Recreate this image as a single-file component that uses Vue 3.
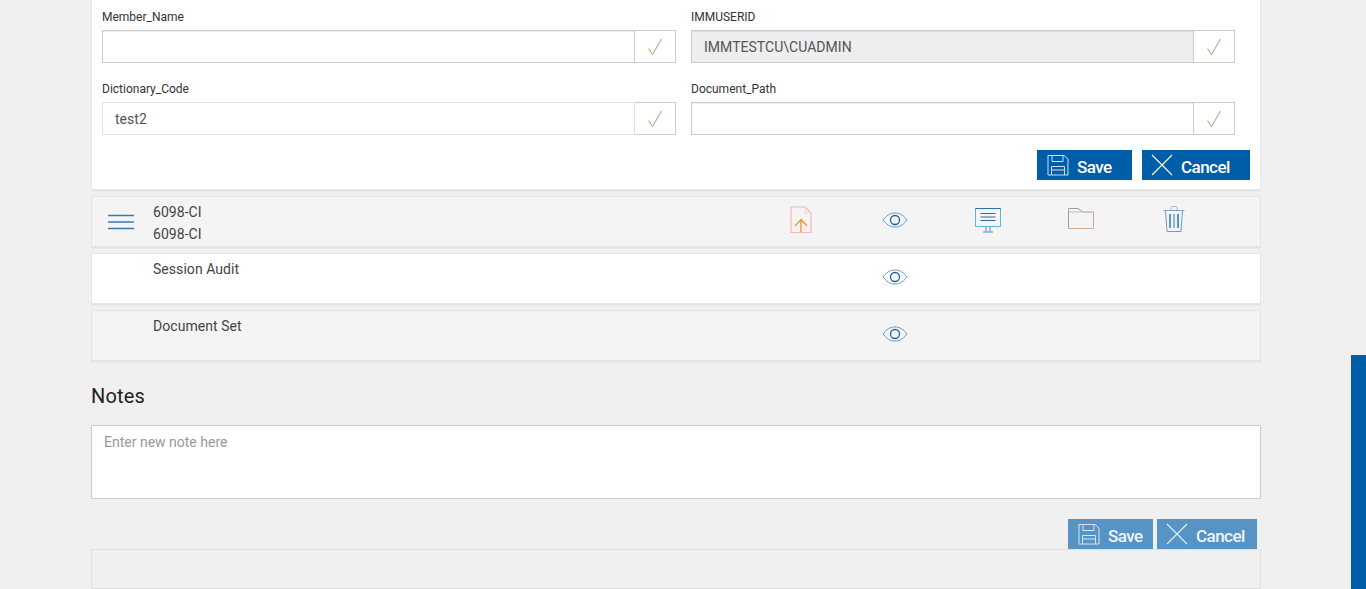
<script setup>
const top = [
  { label: 'Member_Name', value: '', state: 'wide' },
  { label: 'IMMUSERID', value: 'IMMTESTCU\\CUADMIN', state: 'narrow disabled' },
  { label: 'Dictionary_Code', value: 'test2', state: 'wide light' },
  { label: 'Document_Path', value: '', state: 'narrow' },
]
</script>

<template>
  <main class="page">
    <section class="card">
      <div class="fields">
        <div v-for="f in top" :key="f.label" class="field" :class="f.state">
          <label class="lbl">{{ f.label }}</label>
          <div class="group">
            <div class="input">{{ f.value }}</div>
            <div class="addon">
              <svg width="18" height="18" viewBox="0 0 18 18" fill="none">
                <path d="M2.5 10.5 L6.5 16.5 L15.5 1" stroke="#a3bd8e" stroke-width="1.15" />
              </svg>
            </div>
          </div>
        </div>
      </div>
      <div class="actions">
        <button class="btn save">
          <svg class="ico" width="22" height="22" viewBox="0 0 22 22" fill="none" stroke="#cfe0ef" stroke-width="1">
            <path d="M1 1.5 H17 L21 5 V21 H1 Z" />
            <path d="M5 1.5 V7.5 H16 V1.5" />
            <path d="M4.5 21 V12.5 H17.5 V21 M4.5 16 H17.5" />
          </svg>
          <span>Save</span>
        </button>
        <button class="btn cancel">
          <svg class="ico" width="22" height="22" viewBox="0 0 22 22" fill="none" stroke="#fff" stroke-width="1.1">
            <path d="M1 1 L21 21 M21 1 L1 21" />
          </svg>
          <span>Cancel</span>
        </button>
      </div>
    </section>

    <section class="row grey">
      <div class="burger">
        <svg width="26" height="16" viewBox="0 0 26 16" fill="none" stroke="#3d78b2" stroke-width="1.4">
          <path d="M0 1.5 H26 M0 8 H26 M0 14.5 H26" />
        </svg>
      </div>
      <div class="txt">
        <div>6098-CI</div>
        <div>6098-CI</div>
      </div>
      <div class="cell">
        <svg width="22" height="28" viewBox="0 0 22 28" fill="none">
          <path d="M1 1 H15 L21 7 V26.5 H1 Z" stroke="#f7b2bb" stroke-width="1.2" />
          <path d="M15 1 V7 H21" stroke="#f7cfc8" stroke-width="1" />
          <path d="M11 26 V13.5 M5 20 L11 13.5 L17 20" stroke="#f7913f" stroke-width="1.4" />
        </svg>
      </div>
      <div class="cell">
        <svg class="eye" width="26" height="16" viewBox="0 0 26 16" fill="none">
          <path d="M1 8 C6 1.5 10 1 13 1 C16 1 20 1.5 25 8 C20 14.5 16 15 13 15 C10 15 6 14.5 1 8 Z" stroke="#6a97c2" stroke-width="1" />
          <circle cx="13" cy="8" r="4.5" stroke="#1a62a8" stroke-width="1.3" />
        </svg>
      </div>
      <div class="cell">
        <svg class="monitor" width="26" height="26" viewBox="0 0 26 26" fill="none">
          <rect x="0.5" y="1.5" width="25" height="18" stroke="#62b4d4" stroke-width="1" />
          <path d="M0.5 1.5 H25.5" stroke="#2f6ea8" stroke-width="1" />
          <path d="M5.5 6.5 H20.5 M5.5 10 H20.5 M5.5 13.5 H20.5" stroke="#2a6aa8" stroke-width="1.2" />
          <path d="M11 20 V24.5 M15 20 V24.5 M8 25 H18" stroke="#4f8cbd" stroke-width="1" />
        </svg>
      </div>
      <div class="cell">
        <svg class="folder" width="26" height="21" viewBox="0 0 26 21" fill="none">
          <path d="M0.5 20.5 V0.5 H10 L15 4 H25.5" stroke="#a897aa" stroke-width="1" />
          <path d="M0.5 4 H15" stroke="#c4b6c4" stroke-width="1" />
          <path d="M25.5 4 V20.5 H0.5" stroke="#d9a796" stroke-width="1" />
        </svg>
      </div>
      <div class="cell">
        <svg width="22" height="26" viewBox="0 0 22 26" fill="none">
          <path d="M0.5 4.5 H21.5" stroke="#7ea6cb" stroke-width="1" />
          <path d="M8 4 V1.5 Q8 0.5 9 0.5 H13 Q14 0.5 14 1.5 V4" stroke="#a5bdd3" stroke-width="1" />
          <path d="M2.5 5 L4 25.5 H18 L19.5 5" stroke="#6f9ac4" stroke-width="1" />
          <path d="M7 8 V22" stroke="#2f6ea8" stroke-width="1.4" />
          <path d="M11 8 V22" stroke="#49a8d0" stroke-width="1.4" />
          <path d="M15 8 V22" stroke="#1f5f9f" stroke-width="1.4" />
        </svg>
      </div>
    </section>

    <section class="row white">
      <div class="burger"></div>
      <div class="txt"><div>Session Audit</div></div>
      <div class="cell"></div>
      <div class="cell">
        <svg class="eye" width="26" height="16" viewBox="0 0 26 16" fill="none">
          <path d="M1 8 C6 1.5 10 1 13 1 C16 1 20 1.5 25 8 C20 14.5 16 15 13 15 C10 15 6 14.5 1 8 Z" stroke="#6a97c2" stroke-width="1" />
          <circle cx="13" cy="8" r="4.5" stroke="#1a62a8" stroke-width="1.3" />
        </svg>
      </div>
    </section>

    <section class="row grey">
      <div class="burger"></div>
      <div class="txt"><div>Document Set</div></div>
      <div class="cell"></div>
      <div class="cell">
        <svg class="eye" width="26" height="16" viewBox="0 0 26 16" fill="none">
          <path d="M1 8 C6 1.5 10 1 13 1 C16 1 20 1.5 25 8 C20 14.5 16 15 13 15 C10 15 6 14.5 1 8 Z" stroke="#6a97c2" stroke-width="1" />
          <circle cx="13" cy="8" r="4.5" stroke="#1a62a8" stroke-width="1.3" />
        </svg>
      </div>
    </section>

    <h2 class="notes">Notes</h2>
    <div class="note-box">Enter new note here</div>

    <div class="note-actions">
      <button class="btn soft s1">
        <svg class="ico" width="22" height="22" viewBox="0 0 22 22" fill="none" stroke="#d8e5f0" stroke-width="1">
          <path d="M1 1.5 H17 L21 5 V21 H1 Z" />
          <path d="M5 1.5 V7.5 H16 V1.5" />
          <path d="M4.5 21 V12.5 H17.5 V21 M4.5 16 H17.5" />
        </svg>
        <span>Save</span>
      </button>
      <button class="btn soft s2">
        <svg class="ico" width="22" height="22" viewBox="0 0 22 22" fill="none" stroke="#e8f0f7" stroke-width="1.1">
          <path d="M1 1 L21 21 M21 1 L1 21" />
        </svg>
        <span>Cancel</span>
      </button>
    </div>
    <div class="bottom"></div>

    <div class="scroll"></div>
  </main>
</template>

<style>
html, body { margin: 0; height: 589px; overflow: hidden; background: #f0f0f0; }
</style>

<style scoped>
.page {
  position: relative;
  box-sizing: border-box;
  width: 1366px;
  height: 589px;
  overflow: hidden;
  padding-left: 91px;
  background: #f0f0f0;
  font-family: Roboto, "Liberation Sans", sans-serif;
  color: #333;
}
.card {
  box-sizing: border-box;
  width: 1170px;
  height: 191px;
  background: #fff;
  border: 1px solid #e6e6e6;
  border-top: 0;
  border-bottom: 2px solid #e4e4e4;
  box-shadow: 0 1px 0 #e9e9e9;
  padding: 10px 10px 0;
}
.fields {
  display: grid;
  grid-template-columns: 574px 1fr;
  column-gap: 15px;
  row-gap: 19px;
}
.lbl {
  display: block;
  height: 20px;
  font-size: 12px;
  line-height: 14px;
  color: #333;
}
.group { display: flex; height: 33px; box-sizing: border-box; }
.narrow .group { width: 544px; }
.input {
  flex: 1;
  box-sizing: border-box;
  border: 1px solid #ccc;
  background: #fff;
  box-shadow: inset 0 1px 1px rgba(0, 0, 0, 0.075);
  padding-left: 12px;
  font-size: 14px;
  letter-spacing: 0.03px;
  line-height: 33px;
  color: #555;
}
.light .input { border-color: #e2e2e2; box-shadow: none; }
.disabled .input { background: #eee; }
.addon {
  width: 41px;
  box-sizing: border-box;
  border: 1px solid #ccc;
  border-left: 0;
  display: flex;
  align-items: center;
  justify-content: center;
  background: #fff;
}
.actions {
  display: flex;
  justify-content: flex-end;
  gap: 10px;
  margin-top: 15px;
}
.btn {
  display: flex;
  align-items: center;
  height: 30px;
  padding: 0;
  border: 0;
  color: #fff;
  background: #005ea8;
  font-family: Roboto, "Liberation Sans", sans-serif;
  font-size: 17px;
  font-weight: 500;
  letter-spacing: -0.55px;
}
.btn span { padding-top: 4px; }
.btn .ico { margin-right: 8px; }
.save { width: 95px; padding-left: 10px; }
.cancel { width: 108px; padding-left: 9px; }
.row {
  box-sizing: border-box;
  width: 1170px;
  height: 52px;
  margin-top: 5px;
  border: 1px solid #e4e4e4;
  border-bottom-width: 2px;
  box-shadow: 0 1px 0 #e9e9e9;
  display: grid;
  grid-template-columns: 61px 1fr repeat(5, 93.3px);
  padding-right: 39px;
  font-size: 14px;
  letter-spacing: 0.05px;
  line-height: 22px;
  color: #444;
}
.grey { background: #f4f4f4; }
.white { background: #fff; }
.burger { padding: 17px 0 0 16px; }
.burger svg { display: block; }
.txt { padding-top: 4px; }
.cell {
  display: flex;
  justify-content: center;
  align-items: flex-start;
  padding-top: 9px;
  height: 32px;
}
.cell .eye { margin: 6px 0 0 2px; }
.cell .folder { margin-top: 2px; }
.cell .monitor { margin-top: 1px; }
.notes {
  margin: 22px 0 0;
  height: 24px;
  font-size: 20px;
  line-height: 24px;
  font-weight: 400;
  color: #222;
  letter-spacing: 0.2px;
}
.note-box {
  box-sizing: border-box;
  width: 1170px;
  height: 74px;
  margin-top: 17px;
  background: #fff;
  border: 1px solid #ccc;
  padding: 8px 12px;
  font-size: 14px;
  line-height: 17px;
  color: #999;
}
.note-actions {
  display: flex;
  justify-content: flex-end;
  gap: 4px;
  width: 1166px;
  margin-top: 20px;
}
.soft { background: #5594c5; color: #eef4f9; }
.s1 { width: 85px; padding-left: 10px; }
.s2 { width: 100px; padding-left: 9px; }
.bottom {
  box-sizing: border-box;
  width: 1170px;
  height: 40px;
  background: #f0f0f0;
  border: 1px solid #e0e0e0;
}
.scroll {
  position: absolute;
  right: 0;
  top: 355px;
  width: 15px;
  height: 234px;
  background: #005ea8;
}
</style>
